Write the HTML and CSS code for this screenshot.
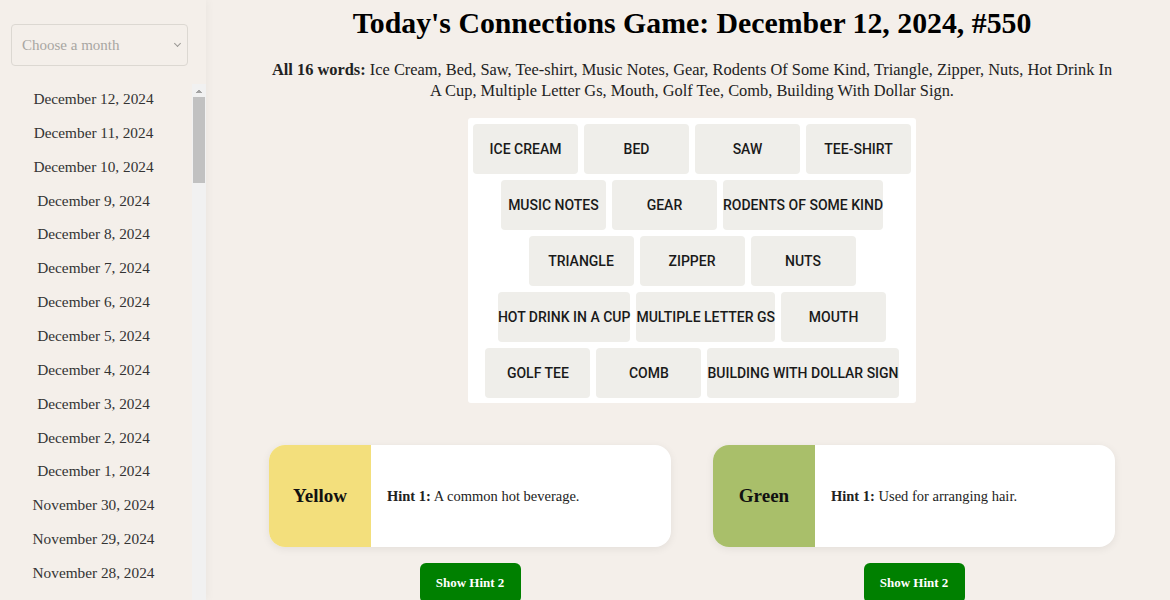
FILE: index.html
```html
<!doctype html>
<html>
<head>
<meta charset="utf-8">
<meta name="viewport" content="width=device-width,initial-scale=1.0" />
<title>Today's Connections Game: December 12, 2024, #550</title>
<link rel="stylesheet" href="styles.css">
</head>
<body>
  <aside id="sidebar">
    <div class="month-wrap">
      <select id="month">
        <option value="">Choose a month</option>
        <option>December 2024</option>
        <option>November 2024</option>
        <option>October 2024</option>
      </select>
    </div>
    <div class="days-wrap">
      <ul id="days"></ul>
      <div class="scrollbar">
        <span class="scroll-up"></span>
        <span class="scroll-thumb"></span>
      </div>
    </div>
  </aside>

  <main id="game">
    <h1>Today's Connections Game: December 12, 2024, #550</h1>
    <p class="all-words"><b>All 16 words:</b> Ice Cream, Bed, Saw, Tee-shirt, Music Notes, Gear, Rodents Of Some Kind, Triangle, Zipper, Nuts, Hot Drink In A Cup, Multiple Letter Gs, Mouth, Golf Tee, Comb, Building With Dollar Sign.</p>

    <div class="board">
      <div class="board-row">
        <span class="tile">Ice Cream</span>
        <span class="tile">Bed</span>
        <span class="tile">Saw</span>
        <span class="tile">Tee-shirt</span>
      </div>
      <div class="board-row">
        <span class="tile">Music Notes</span>
        <span class="tile">Gear</span>
        <span class="tile">Rodents Of Some Kind</span>
      </div>
      <div class="board-row">
        <span class="tile">Triangle</span>
        <span class="tile">Zipper</span>
        <span class="tile">Nuts</span>
      </div>
      <div class="board-row">
        <span class="tile">Hot Drink In A Cup</span>
        <span class="tile">Multiple Letter Gs</span>
        <span class="tile">Mouth</span>
      </div>
      <div class="board-row">
        <span class="tile">Golf Tee</span>
        <span class="tile">Comb</span>
        <span class="tile">Building With Dollar Sign</span>
      </div>
    </div>

    <div class="hints">
      <div class="hint-col">
        <div class="hint-card">
          <div class="hint-color yellow">Yellow</div>
          <div class="hint-text"><p><b>Hint 1:</b> A common hot beverage.</p></div>
        </div>
        <button class="hint-btn">Show Hint 2</button>
      </div>
      <div class="hint-col">
        <div class="hint-card">
          <div class="hint-color green">Green</div>
          <div class="hint-text"><p><b>Hint 1:</b> Used for arranging hair.</p></div>
        </div>
        <button class="hint-btn">Show Hint 2</button>
      </div>
    </div>
  </main>

<script>
const months = ['January', 'February', 'March', 'April', 'May', 'June', 'July',
                'August', 'September', 'October', 'November', 'December'];

window.addEventListener('DOMContentLoaded', _ => {
  const days = document.getElementById('days');
  const d = new Date(2024, 11, 12);

  for(let i=0; i<86; i++) {
    let li = document.createElement('li');
    li.innerHTML = `<a href="#">${months[d.getMonth()]} ${d.getDate()}, ${d.getFullYear()}</a>`;
    days.appendChild(li);
    d.setDate(d.getDate() - 1);
  }
});
</script>
</body>
</html>
```

FILE: styles.css
```css
html {
  height: 100%;
  background: #f4efea;
}

body {
  display: flex;
  height: 100%;
  margin: 0;
  font-family: "Liberation Serif", "Times New Roman", serif;
  color: #111;
  overflow: hidden;
}

#sidebar {
  display: flex;
  flex-direction: column;
  flex: 0 0 206px;
  height: 100%;
  background: #f4efea;
  box-shadow: 2px 0 8px rgba(0, 0, 0, 0.04);
  position: relative;
  z-index: 1;
}

.month-wrap {
  position: relative;
  padding: 24px 18px 18px 11px;
}

/* thin chevron drawn over the select */
.month-wrap::after {
  content: '';
  position: absolute;
  top: 41px;
  right: 26px;
  width: 4px;
  height: 4px;
  border-right: 1px solid #9a9894;
  border-bottom: 1px solid #9a9894;
  transform: rotate(45deg);
  pointer-events: none;
}

#month {
  width: 100%;
  height: 42px;
  padding: 0 10px;
  border: 1px solid #dcd8d2;
  border-radius: 4px;
  background: #f4efea;
  color: #a8a6a2;
  font-family: "Liberation Serif", serif;
  font-size: 15px;
  appearance: none;
  -webkit-appearance: none;
}

.days-wrap {
  display: flex;
  flex: 1 1 auto;
  min-height: 0;
}

#days {
  flex: 1 1 auto;
  margin: 0;
  padding: 0 5px 0 0;
  list-style: none;
  overflow: hidden;
}

.scrollbar {
  display: flex;
  flex-direction: column;
  flex: 0 0 14px;
  background: #f1f1f1;
}

.scroll-up {
  height: 13px;
  background-image:
    linear-gradient(to top left, #a3a3a3 50%, transparent 50%),
    linear-gradient(to top right, #a3a3a3 50%, transparent 50%);
  background-size: 4px 4px, 4px 4px;
  background-position: 3px 5px, 7px 5px;
  background-repeat: no-repeat;
}

.scroll-thumb {
  height: 86px;
  margin: 0 1px;
  background: #c1c1c1;
}

#days li {
  height: 33.86px;
  line-height: 30px;
  text-align: center;
}

#days a {
  color: #333;
  font-size: 15.3px;
  text-decoration: none;
}

#game {
  flex: 1 1 auto;
  display: flex;
  flex-direction: column;
  align-items: center;
  padding: 0 0 0 8px;
}

h1 {
  margin: 5px 0 0;
  font-size: 29.8px;
  line-height: 36px;
  color: #000;
}

.all-words {
  width: 846px;
  margin: 18px 0 17px;
  font-size: 16.4px;
  line-height: 21px;
  text-align: center;
  color: #222;
}

.board {
  display: flex;
  flex-direction: column;
  padding: 3px 2px 2px;
  background: #fff;
  border-radius: 3px;
}

.board-row {
  display: flex;
  justify-content: center;
}

.tile {
  display: flex;
  align-items: center;
  justify-content: center;
  min-width: 105px;
  height: 50px;
  margin: 3px;
  background: #efeeea;
  border-radius: 4px;
  font-family: Roboto, "Liberation Sans", sans-serif;
  font-weight: 500;
  font-size: 14px;
  text-transform: uppercase;
  white-space: nowrap;
  color: #1a1a1a;
}

.hints {
  display: flex;
  gap: 42px;
  margin-top: 42px;
}

.hint-col {
  display: flex;
  flex-direction: column;
  align-items: center;
  width: 402px;
}

.hint-card {
  display: flex;
  width: 100%;
  height: 102px;
  background: #fff;
  border-radius: 16px;
  overflow: hidden;
  box-shadow: 0 2px 8px rgba(0, 0, 0, 0.07);
}

.hint-color {
  display: flex;
  flex: 0 0 102px;
  align-items: center;
  justify-content: center;
  font-weight: bold;
  font-size: 19px;
}

.yellow {
  background: #f3df7c;
}

.green {
  background: #a9bf6a;
}

.hint-text {
  display: flex;
  align-items: center;
  padding-left: 16px;
  font-size: 14.5px;
  color: #222;
}

.hint-text p {
  margin: 0;
}

.hint-btn {
  margin-top: 16px;
  width: 101px;
  height: 40px;
  border: 0;
  border-radius: 6px;
  background: #008000;
  color: #fff;
  font-family: "Liberation Serif", serif;
  font-weight: bold;
  font-size: 13px;
}
```
